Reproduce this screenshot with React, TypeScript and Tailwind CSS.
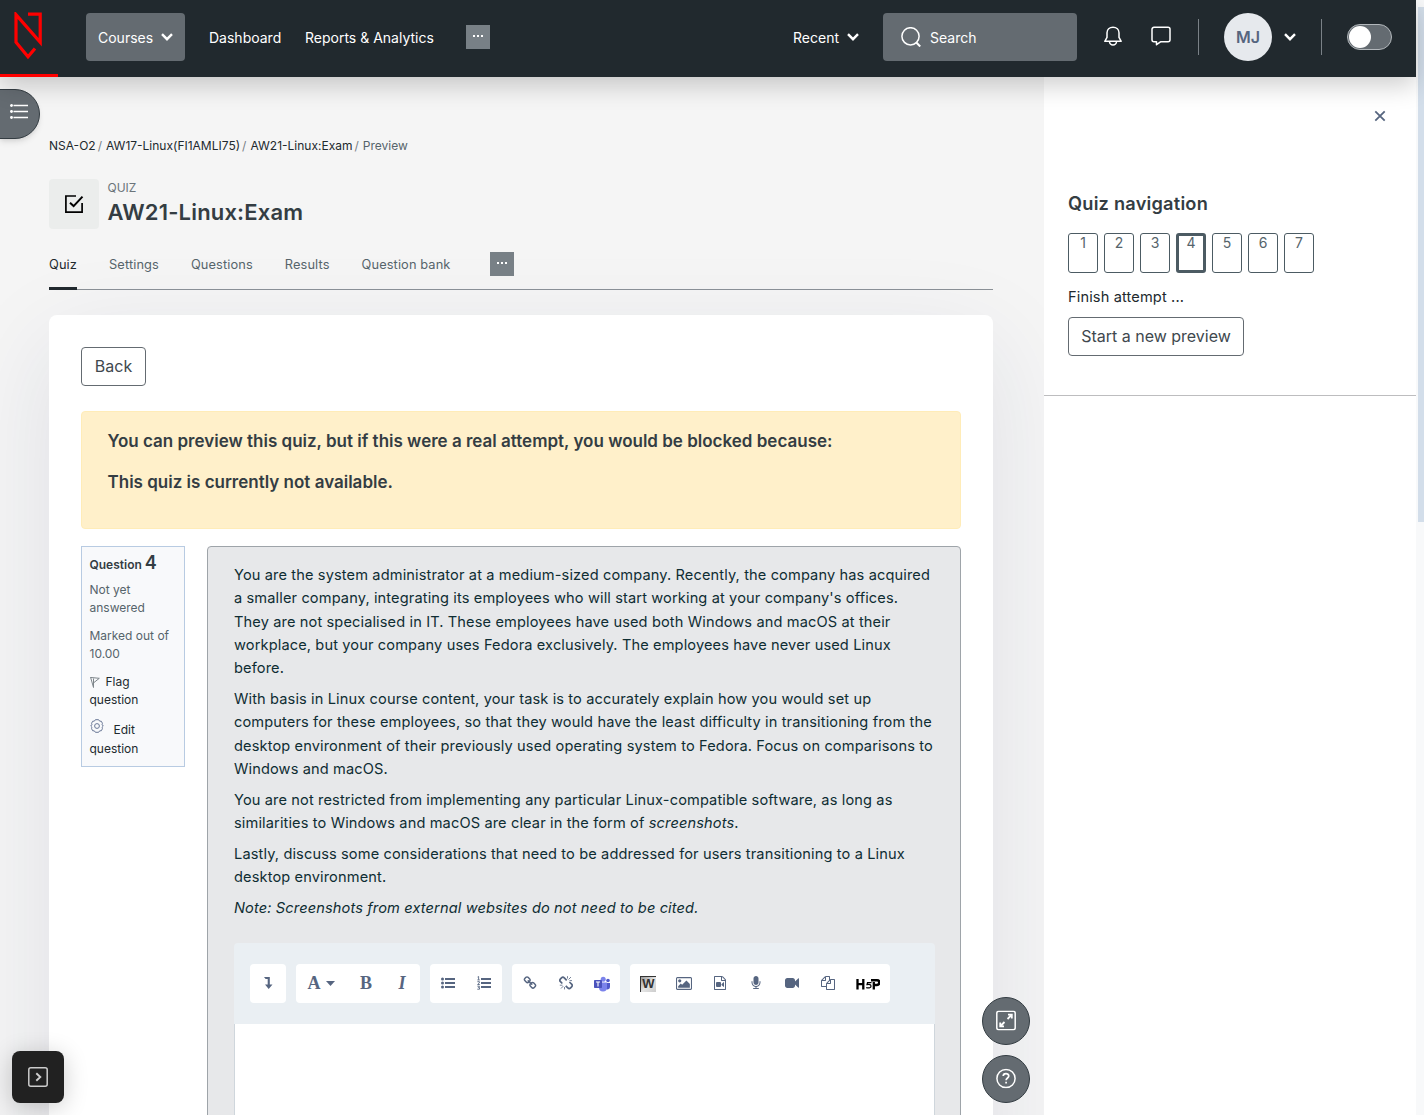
import type { ReactNode } from "react";

function Fa({ d, box = "0 0 1792 1792", className = "h-4 w-4" }: { d: string; box?: string; className?: string }) {
  return (
    <svg viewBox={box} className={className} fill="currentColor">
      <path fillRule="evenodd" d={d} />
    </svg>
  );
}

const LINK =
  "M1520 1216q0-40-28-68l-208-208q-28-28-68-28-42 0-72 32 3 3 19 18.5t21.5 21.5 15 19 13 25.5 3.5 27.5q0 40-28 68t-68 28q-15 0-27.5-3.5t-25.5-13-19-15-21.5-21.5-18.5-19q-33 31-33 73 0 40 28 68l206 207q27 27 68 27 40 0 68-26l147-146q28-28 28-67zm-703-705q0-40-28-68l-206-207q-28-28-68-28-39 0-68 27l-147 146q-28 28-28 67 0 40 28 68l208 208q27 27 68 27 42 0 72-31-3-3-19-18.5t-21.5-21.5-15-19-13-25.5-3.5-27.5q0-40 28-68t68-28q15 0 27.5 3.5t25.5 13 19 15 21.5 21.5 18.5 19q33-31 33-73zm895 705q0 120-85 203l-147 146q-83 83-203 83-121 0-204-85l-206-207q-83-83-83-203 0-123 88-209l-88-88q-86 88-208 88-120 0-204-84l-208-208q-84-84-84-204t85-203l147-146q83-83 203-83 121 0 204 85l206 207q83 83 83 203 0 123-88 209l88 88q86-88 208-88 120 0 204 84l208 208q84 84 84 204z";
const IMAGE =
  "M576 576q0 80-56 136t-136 56-136-56-56-136 56-136 136-56 136 56 56 136zm1024 384v448h-1408v-192l320-320 160 160 512-512zm96-704h-1600q-13 0-22.5 9.5t-9.5 22.5v1216q0 13 9.5 22.5t22.5 9.5h1600q13 0 22.5-9.5t9.5-22.5v-1216q0-13-9.5-22.5t-22.5-9.5zm160 32v1216q0 66-47 113t-113 47h-1600q-66 0-113-47t-47-113v-1216q0-66 47-113t113-47h1600q66 0 113 47t47 113z";
const FILE_VIDEO =
  "M1596 380q28 28 48 76t20 88v1152q0 40-28 68t-68 28h-1344q-40 0-68-28t-28-68v-1600q0-40 28-68t68-28h896q40 0 88 20t76 48zm-444-244v376h376q-10-29-22-41l-313-313q-12-12-41-22zm384 1528v-1024h-416q-40 0-68-28t-28-68v-416h-768v1536h1280zM512 768h384q128 0 128 128v384q0 128-128 128h-384q-128 0-128-128v-384q0-128 128-128zM1370 770q38 10 38 60v516q0 50-38 60l-282-270v-96z";
const MIC =
  "M1472 704v128q0 221-147.5 384.5t-364.5 187.5v132h256q26 0 45 19t19 45-19 45-45 19h-640q-26 0-45-19t-19-45 19-45 45-19h256v-132q-217-24-364.5-187.5t-147.5-384.5v-128q0-26 19-45t45-19 45 19 19 45v128q0 185 131.5 316.5t316.5 131.5 316.5-131.5 131.5-316.5v-128q0-26 19-45t45-19 45 19 19 45zm-256-384v512q0 132-94 226t-226 94-226-94-94-226v-512q0-132 94-226t226-94 226 94 94 226z";
const CAMERA =
  "M1792 352v1088q0 42-39 59-13 5-25 5-27 0-45-19l-403-403v166q0 119-84.5 203.5t-203.5 84.5h-704q-119 0-203.5-84.5t-84.5-203.5v-704q0-119 84.5-203.5t203.5-84.5h704q119 0 203.5 84.5t84.5 203.5v165l403-402q18-19 45-19 12 0 25 5 39 17 39 59z";
const COPY =
  "M1696 384q40 0 68 28t28 68v1216q0 40-28 68t-68 28h-960q-40 0-68-28t-28-68v-288h-544q-40 0-68-28t-28-68v-672q0-40 20-88t48-76l408-408q28-28 76-48t88-20h416q40 0 68 28t28 68v328q68-40 128-40h416zm-544 213l-299 299h299v-299zm-640-384l-299 299h299v-299zm196 647l316-316v-416h-384v416q0 40-28 68t-68 28h-416v640h512v-256q0-40 20-88t48-76zm956 804v-1152h-384v416q0 40-28 68t-68 28h-416v640h896z";

function Chevron({ className = "" }: { className?: string }) {
  return (
    <svg viewBox="0 0 12 8" className={`h-2 w-3 ${className}`} fill="none" stroke="currentColor" strokeWidth="2.4">
      <path d="M1 1.2 6 6.2 11 1.2" />
    </svg>
  );
}

function Dots({ className }: { className: string }) {
  return (
    <div className={`flex h-6 w-6 items-start justify-center gap-[2px] bg-[#788086] pt-[10px] ${className}`}>
      <i className="h-[2px] w-[2px] bg-white" />
      <i className="h-[2px] w-[2px] bg-white" />
      <i className="h-[2px] w-[2px] bg-white" />
    </div>
  );
}

function Header() {
  return (
    <header className="relative z-20 flex h-[77px] w-[1416px] shrink-0 bg-[#21292e] text-[14px] text-white shadow-[0_8px_24px_rgba(0,0,0,0.2)]">
      <div className="h-[77px] w-[58px] border-b-[3px] border-[#f00] pl-[14px] pt-3">
        <svg viewBox="0 0 28 48" className="h-12 w-7" fill="none" stroke="#f00" strokeWidth="3.200">
          <path d="M14 2.200h12.200v28L2 2.600v27.600l12 14.600 7-8.300" />
        </svg>
      </div>
      <div className="ml-7 mt-[13px] flex h-12 w-[99px] items-center rounded-[4px] bg-[#646b71] pl-3">
        <span className="w-[63px]">Courses</span>
        <Chevron />
      </div>
      <div className="mt-[13px] flex h-12 items-center">
        <span className="ml-6 w-[96px]">Dashboard</span>
        <span className="w-[161px] whitespace-nowrap">Reports &amp; Analytics</span>
        <Dots className="" />
      </div>
      <div className="ml-auto mt-[13px] flex h-12 items-center">
        <span className="w-[54px]">Recent</span>
        <Chevron />
        <div className="ml-6 flex h-12 w-[194px] items-center rounded-[4px] bg-[#646b71] pl-[18px]">
          <svg viewBox="0 0 20 20" className="h-5 w-5" fill="none" stroke="currentColor" strokeWidth="1.500">
            <circle cx="9.500" cy="9.300" r="8.600" />
            <path strokeWidth="2" d="M15.300 15.500 19.200 19.500" />
          </svg>
          <span className="ml-[9px]">Search</span>
        </div>
        <svg viewBox="0 0 20 20" className="ml-[26px] h-5 w-5 -translate-y-px" fill="none" stroke="currentColor" strokeWidth="1.500">
          <path
            strokeLinejoin="round"
            d="M10 1.200c-3.500 0-6 2.400-6 5.600v4.600L1.800 15.300h16.400L16 11.400V6.800c0-3.200-2.500-5.600-6-5.600z"
          />
          <path d="M6.500 15.500a3.500 3.500 0 0 0 7 0" />
        </svg>
        <svg viewBox="0 0 20 20" className="ml-7 h-5 w-5 -translate-y-px" fill="none" stroke="currentColor" strokeWidth="1.500">
          <path
            strokeLinejoin="round"
            d="M3 1.300h14a2 2 0 0 1 2 2v10.500a2 2 0 0 1-2 2H9.500L5.500 18.700v-2.900H3a2 2 0 0 1-2-2V3.300a2 2 0 0 1 2-2z"
          />
        </svg>
        <div className="ml-[27px] h-9 w-px bg-[#7a8187]" />
        <div className="ml-[25px] flex h-12 w-12 items-center justify-center rounded-full bg-[#e6e9ed] text-[16px] font-semibold text-[#56657f]">
          MJ
        </div>
        <Chevron className="ml-3 mr-px" />
        <div className="ml-[24px] h-9 w-px bg-[#7a8187]" />
        <div className="ml-[25px] mr-6 h-[26px] w-[45px] rounded-full border border-[#b2b7bb] bg-[#646b71] p-px">
          <div className="h-[22px] w-[22px] rounded-full bg-white" />
        </div>
      </div>
    </header>
  );
}

function Group({ children, className = "" }: { children: ReactNode; className?: string }) {
  return (
    <div className={`flex h-[39px] items-center justify-center rounded-[4px] bg-white pb-px ${className}`}>{children}</div>
  );
}

function Cell({ children }: { children: ReactNode }) {
  return <div className="flex h-9 w-9 shrink-0 items-center justify-center">{children}</div>;
}

function Toolbar() {
  return (
    <div className="flex h-[81px] items-start gap-[10px] rounded-t-[4px] bg-[#eaeff3] px-4 pt-[21px] text-[#566580]">
      <Group className="w-9">
        <svg viewBox="0 0 10 14" className="h-[14px] w-[10px]" fill="currentColor">
          <path d="M1 1h5.800v7.500H9.500L5.700 13 2 8.500h2.700V3H2.600z" />
        </svg>
      </Group>
      <Group className="w-[124px]">
        <div className="flex h-9 w-[52px] items-center justify-center pr-[2px]">
          <span className="font-['Liberation_Serif',serif] text-[18px] font-bold leading-none">A</span>
          <svg viewBox="0 0 9 5" className="ml-[5px] h-[5px] w-[9px]" fill="currentColor">
            <path d="M0 0h9L4.500 5z" />
          </svg>
        </div>
        <Cell>
          <span className="font-['Liberation_Serif',serif] text-[18px] font-bold leading-none">B</span>
        </Cell>
        <Cell>
          <span className="font-['Liberation_Serif',serif] text-[18px] font-bold italic leading-none">I</span>
        </Cell>
      </Group>
      <Group className="w-[72px]">
        <Cell>
          <svg viewBox="0 0 14 12" className="h-3 w-[14px]" fill="currentColor">
            <circle cx="1.500" cy="2" r="1.500" />
            <circle cx="1.500" cy="6" r="1.500" />
            <circle cx="1.500" cy="10" r="1.500" />
            <path d="M4 1h10v2H4zM4 5h10v2H4zM4 9h10v2H4z" />
          </svg>
        </Cell>
        <Cell>
          <svg viewBox="0 0 14 14" className="h-[14px] w-[14px]" fill="currentColor">
            <path d="M4 2h10v2H4zM4 6h10v2H4zM4 10h10v2H4z" />
            <path
              d="M.6 1 1.600.5v3.300M.4 3.900h2.400M.4 5.700h2v1.200L.6 8.500h2.200M.4 10.200h2.100L1.400 11.500h1.100v1.700H.3"
              fill="none"
              stroke="currentColor"
              strokeWidth=".9"
            />
          </svg>
        </Cell>
      </Group>
      <Group className="w-[108px]">
        <Cell>
          <Fa d={LINK} className="h-[14px] w-[14px]" />
        </Cell>
        <Cell>
          <svg viewBox="0 0 14 14" className="h-[14px] w-[14px]" fill="none" stroke="currentColor">
            <path
              strokeWidth="1.700"
              d="M3.300 7.500 1.500 5.700a2 2 0 0 1 0-2.800l1-1a2 2 0 0 1 2.800 0l2.400 2.500M6.700 9.800l2.100 2.100a2 2 0 0 0 2.800 0l1-1a2 2 0 0 0 0-2.800L10.400 6"
            />
            <path
              strokeWidth=".8"
              d="M9.500 3.500 12 1M8.500 2.500V.2M10.500 4.600H13M4.300 10.100 2 12.500M5.500 11v2.400M3.500 9.200H.8"
            />
          </svg>
        </Cell>
        <Cell>
          <svg viewBox="0 0 16 16" className="h-4 w-4 translate-y-px">
            <circle cx="14" cy="4.500" r="1.800" fill="#5059c9" />
            <path d="M11.500 7H16v4a2.500 2.500 0 0 1-4.500 1.500z" fill="#5059c9" />
            <circle cx="9.200" cy="3.200" r="2.500" fill="#7b83eb" />
            <path d="M5 6.500h8v5a4 4 0 0 1-8 0z" fill="#7b83eb" />
            <rect y="4" width="8" height="8" rx=".7" fill="#4b53bc" />
            <path d="M2 6h4M4 6v4.500" stroke="#fff" strokeWidth="1.100" />
          </svg>
        </Cell>
      </Group>
      <Group className="w-[260px]">
        <Cell>
          <div className="flex h-4 w-4 translate-y-px items-center justify-center border-l border-t border-[#333] bg-gradient-to-br from-[#999] via-[#e4e4e4] to-[#ccc] pb-[2px] font-['Liberation_Sans',sans-serif] text-[13px] font-bold leading-none text-[#333]">
            W
          </div>
        </Cell>
        <Cell>
          <Fa d={IMAGE} box="-64 0 1920 1792" className="h-[15px] w-4" />
        </Cell>
        <Cell>
          <Fa d={FILE_VIDEO} className="h-[14px] w-[14px]" />
        </Cell>
        <Cell>
          <Fa d={MIC} className="h-[14px] w-[14px]" />
        </Cell>
        <Cell>
          <Fa d={CAMERA} className="h-[14px] w-[14px]" />
        </Cell>
        <Cell>
          <Fa d={COPY} className="h-[14px] w-[14px]" />
        </Cell>
        <div className="flex h-9 w-[44px] items-center justify-center pt-[2px]">
          <svg viewBox="0 0 24 12" className="h-3 w-6" fill="none" stroke="#000">
            <path strokeWidth="2.300" d="M1.500 1v10.500M7.300 1v10.500M1 6.200h6M17.800 4v7.500" />
            <path strokeWidth="2.500" d="M15 2.300h6a2 2 0 0 1 0 4.600H17.500" />
            <path strokeWidth="1.200" d="M15.500 4.600h-4l-.5 2q4-.7 4 1.600t-4.800 1.500" />
          </svg>
        </div>
      </Group>
    </div>
  );
}

function QuestionInfo() {
  return (
    <aside className="h-[221px] w-[104px] shrink-0 border border-[#b8cbe2] bg-[#f8f9fb] px-[7.500px] pt-[5px] text-[12px] leading-[18px] text-[#56646b]">
      <h3 className="h-[29px] whitespace-nowrap font-semibold leading-[22px] text-[#343d43]">
        Question <span className="text-[18px] tracking-[0.015em]">4</span>
      </h3>
      <p>Not yet answered</p>
      <p className="mt-[10px] whitespace-nowrap">
        Marked out of
        <br />
        10.00
      </p>
      <p className="mt-[10px] text-[#21292e]">
        <svg viewBox="0 0 10 12" className="mr-[6px] inline h-3 w-[10px] align-[-2px]" fill="none" stroke="#7d858a">
          <path d="M.5 1 3.500 11.500M3.500 11.500V2.500M1 1.500l8.300.8L4 6.500" />
        </svg>
        Flag
        <br />
        question
      </p>
      <p className="mt-[10px] leading-[19px] text-[#21292e]">
        <svg viewBox="0 0 14 14" className="mr-[10px] inline h-[14px] w-[14px] align-[1px]" fill="none" stroke="#6a7896">
          <circle cx="7" cy="7" r="2.400" />
          <path
            strokeLinejoin="round"
            d="M5.400.7h3.200l1 1.400 1.800.2 1 2-.3 1.500 1.200 1.200-1.200 1.200.3 1.500-1 2-1.800.2-1 1.400H5.400l-1-1.400-1.800-.2-1-2 .3-1.500L.7 7l1.200-1.200-.3-1.500 1-2 1.800-.2z"
          />
        </svg>
        Edit
        <br />
        question
      </p>
    </aside>
  );
}

function Question() {
  return (
    <section className="ml-[22px] h-[640px] w-[754px] rounded-t-[4px] border border-[#9ea4a9] bg-[#e7e8ea] px-[26px] pt-4">
      <div className="h-[380px] w-[702px] pt-[1.200px] text-[14.600px] leading-[23.300px] tracking-[0.0085em] text-[#0f2d33] [&>p]:mb-[7.500px]">
        <p>
          You are the system administrator at a medium-sized company. Recently, the company has acquired a smaller
          company, integrating its employees who will start working at your company's offices.
          <br />
          They are not specialised in IT. These employees have used both Windows and macOS at their workplace, but your
          company uses Fedora exclusively. The employees have never used Linux before.
        </p>
        <p>
          With basis in Linux course content, your task is to accurately explain how you would set up computers for
          these employees, so that they would have the least difficulty in transitioning from the desktop environment of
          their previously used operating system to Fedora. Focus on comparisons to Windows and macOS.
        </p>
        <p>
          You are not restricted from implementing any particular Linux-compatible software, as long as similarities to
          Windows and macOS are clear in the form of <em>screenshots</em>.
        </p>
        <p>
          Lastly, discuss some considerations that need to be addressed for users transitioning to a Linux desktop
          environment.
        </p>
        <p>
          <em>Note: Screenshots from external websites do not need to be cited.</em>
        </p>
      </div>
      <div className="w-[701px]">
        <Toolbar />
        <div className="h-[150px] border-x border-[#cfd6dc] bg-white" />
      </div>
    </section>
  );
}

function QuizNavigation() {
  return (
    <aside className="h-full w-[372px] shrink-0 bg-white/95">
      <div className="h-[319px] border-b border-[#bdbdbf] pl-6 pt-[33px]">
        <svg viewBox="0 0 12 12" className="ml-[306px] h-3 w-3" fill="none" stroke="#56657f" strokeWidth="1.800">
          <path d="M1.300 1.300l9.400 9.400M10.700 1.300l-9.400 9.400" />
        </svg>
        <h2 className="mt-[69px] text-[18.200px] font-semibold leading-6 tracking-[0.012em] text-[#343d43]">
          Quiz navigation
        </h2>
        <div className="mt-[18px] flex gap-[6px] text-[14px] leading-[18px] text-[#56646b]">
          {[1, 2, 3, 4, 5, 6, 7].map((n) => (
            <div
              key={n}
              className={
                n === 4
                  ? "h-10 w-[30px] rounded-[3px] border-[3px] border-[#4c5b63] text-center leading-[14px]"
                  : "h-10 w-[30px] rounded-[3px] border border-[#4c5b63] text-center"
              }
            >
              {n}
            </div>
          ))}
        </div>
        <p className="mt-3 text-[14.600px] leading-6 tracking-[0.009em] text-[#21292e]">Finish attempt ...</p>
        <button className="mt-2 h-[39px] w-[176px] whitespace-nowrap rounded-[4px] border border-[#646b71] pb-[2px] text-[16px] text-[#40484e]">
          Start a new preview
        </button>
      </div>
    </aside>
  );
}

const ROUND =
  "flex h-12 w-12 items-center justify-center rounded-full border border-[#343d43] bg-[#646b71] text-white";

export default function App() {
  return (
    <div className="relative flex h-[1115px] w-[1424px] overflow-hidden bg-[#f5f5f5] font-['Inter',sans-serif]">
      <div className="flex h-full w-[1416px] flex-col">
        <Header />
        <div className="flex h-[1038px]">
          <main className="w-[1044px] pl-[49px] pt-[60px]">
            <nav className="flex whitespace-nowrap text-[12px] leading-[18px] text-[#21292e]">
              <span>NSA-O2</span>
              <span className="ml-[2px] mr-1 text-[#788086]">/</span>
              <span>AW17-Linux(FI1AMLI75)</span>
              <span className="ml-[2px] mr-1 text-[#788086]">/</span>
              <span>AW21-Linux:Exam</span>
              <span className="ml-[2px] mr-1 text-[#788086]">/</span>
              <span className="text-[#56646b]">Preview</span>
            </nav>
            <div className="mt-6 flex h-[51px]">
              <div className="flex h-[50px] w-[50px] items-center justify-center rounded-[4px] bg-[#ebedec] pb-px pr-px">
                <svg viewBox="0 0 20 20" className="h-5 w-5" fill="none" stroke="#000" strokeWidth="1.700">
                  <path d="M12 2H1.900v16.200h16.200V9" />
                  <path strokeWidth="2" d="M6 8.800l3.600 3.300L18.500 2.600" />
                </svg>
              </div>
              <div className="ml-[8.500px]">
                <p className="text-[12px] leading-[18px] text-[#6b747a]">QUIZ</p>
                <h1 className="text-[22px] font-semibold leading-[31px] tracking-[0.008em] text-[#343d43]">
                  AW21-Linux:Exam
                </h1>
              </div>
            </div>
            <div className="flex h-[60px] w-[944px] border-b border-[#8b9197] text-[12.800px] leading-[69px] tracking-[0.009em] text-[#56646b]">
              <span className="mr-8 h-[60px] border-b-[3px] border-[#21292e] text-[#21292e]">Quiz</span>
              <span className="mr-8">Settings</span>
              <span className="mr-8">Questions</span>
              <span className="mr-8">Results</span>
              <span className="w-[128.500px]">Question bank</span>
              <Dots className="mt-[22px]" />
            </div>
            <div className="mt-[25px] h-[900px] w-[944px] rounded-t-[8px] bg-white px-8 pt-8 shadow-[0_30px_100px_rgba(32,40,90,0.1)]">
              <button className="h-[39px] w-[65px] rounded-[4px] border border-[#646b71] pb-[2px] text-[16px] text-[#40484e]">
                Back
              </button>
              <div className="mt-[25px] h-[118px] w-[880px] rounded-[4px] border border-[#ffecb8] bg-[#fff0ca] px-[25.500px] pt-4 text-[17px] font-semibold leading-[27px] text-[#343d43]">
                <p>You can preview this quiz, but if this were a real attempt, you would be blocked because:</p>
                <p className="mt-[14px]">This quiz is currently not available.</p>
              </div>
              <div className="mt-[17px] flex items-start">
                <QuestionInfo />
                <Question />
              </div>
            </div>
          </main>
          <QuizNavigation />
        </div>
      </div>
      <div className="h-full w-2 bg-[#f8f9fa] pl-[2px] pt-[7px]">
        <div className="h-[515px] bg-[#d3deea]" />
      </div>

      <div className="absolute left-[-1px] top-[89px] z-10 flex h-[50px] w-[41px] items-center rounded-r-full border border-[#343d43] bg-[#646b71] pb-[6px] pl-[9px] text-white shadow-md">
        <svg viewBox="0 0 20 16" className="h-4 w-5" stroke="currentColor" strokeWidth="1.300" fill="currentColor">
          <path d="M4.500 2.500H19M4.500 8.500H19M4.500 14.500H19" />
          <circle cx="2.500" cy="2.500" r=".8" />
          <circle cx="2.500" cy="8.500" r=".8" />
          <circle cx="2.500" cy="14.500" r=".8" />
        </svg>
      </div>
      <div className="absolute left-[982px] top-[997px] z-10 flex flex-col gap-[10px]">
        <div className={ROUND}>
          <svg viewBox="0 0 20 20" className="h-5 w-5 -translate-y-[0.500px]" fill="none" stroke="currentColor" strokeWidth="1.500">
            <rect x=".8" y=".8" width="18.400" height="18.400" rx="2" />
            <path strokeWidth="1.800" d="M11.500 8.500l4-4M12 4.200h3.800V8M8.500 11.500l-4 4M4.200 12v3.800H8" />
          </svg>
        </div>
        <div className={ROUND}>
          <svg viewBox="0 0 20 20" className="h-5 w-5 -translate-y-[0.500px]" fill="none" stroke="currentColor" strokeWidth="1.500">
            <circle cx="10" cy="10" r="9.100" />
            <path strokeWidth="1.700" d="M7.200 7.600c0-3.400 5.600-3.300 5.600-.1 0 2-2.700 2-2.700 4.300M10.100 13.200v1.700" />
          </svg>
        </div>
      </div>
      <div className="absolute left-3 top-[1051px] z-10 flex h-[52px] w-[52px] items-center justify-center rounded-[8px] bg-[#212121] pb-px shadow-[0_4px_24px_rgba(0,0,0,0.2)]">
        <svg viewBox="0 0 20 20" className="h-5 w-5" fill="none" stroke="#ccc" strokeWidth="1.500">
          <rect x=".8" y=".8" width="18.400" height="18.400" rx="2" />
          <path strokeWidth="1.900" d="M8.300 6.200l4 3.800-4 3.800" />
        </svg>
      </div>
    </div>
  );
}
